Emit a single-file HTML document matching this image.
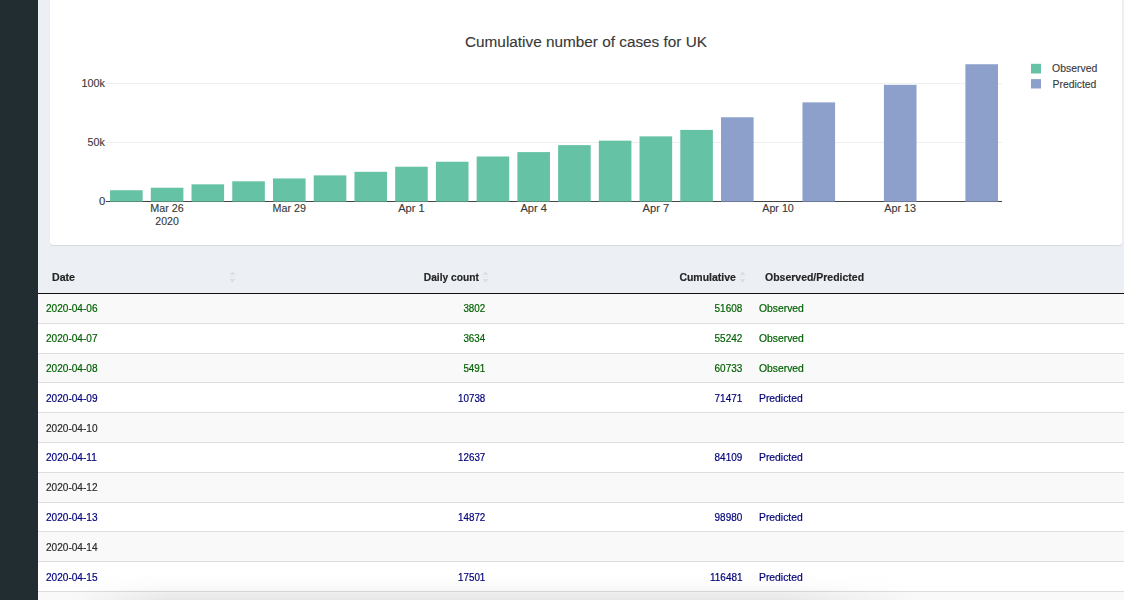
<!DOCTYPE html>
<html><head><meta charset="utf-8"><title>Cumulative number of cases for UK</title>
<style>
html,body{margin:0;padding:0}
body{width:1124px;height:600px;overflow:hidden;background:#ecf0f5;position:relative;font-family:"Liberation Sans",sans-serif}
.sidebar{position:absolute;left:0;top:0;width:38px;height:600px;background:#222d32}
.card{position:absolute;left:50px;top:-20px;width:1072px;height:264.5px;background:#fff;border-radius:3px;box-shadow:0 1px 1px rgba(0,0,0,0.1)}
svg.chart{position:absolute;left:0;top:0;font-family:"Liberation Sans",sans-serif}
.thead{z-index:2;position:absolute;left:38px;top:259px;width:1086px;height:34px;border-bottom:1px solid #111;box-sizing:content-box;font-weight:bold;font-size:11.3px;color:#262626;-webkit-text-stroke:0.2px #262626}
.thead span{position:absolute;top:10.6px;white-space:nowrap;line-height:14px}
.tr{position:absolute;left:38px;width:1086px;height:29.8px;border-top:1px solid #ddd;box-sizing:border-box;font-size:10.9px;line-height:14px;color:#2a2a2a}
.tr.odd{background:#f9f9f9}
.tr.even{background:#fff}
.tr.o{color:#006000}
.tr.p{color:#00007a}
.tr span{-webkit-text-stroke:0.2px currentColor;position:absolute;top:6.6px;white-space:nowrap}
.tr.first{border-top:0}
.c1{left:8px;transform:scaleX(0.925);transform-origin:0 50%}
.c2{right:638.4px;transform:scaleX(0.90);transform-origin:100% 50%}
.c3{right:381.8px;transform:scaleX(0.915);transform-origin:100% 50%}
.c4{left:720.6px;transform:scaleX(0.95);transform-origin:0 50%}
.sort{position:absolute}
.shade{position:absolute;left:38px;top:572px;width:1086px;height:28px;background:linear-gradient(to bottom,rgba(0,0,0,0),rgba(0,0,0,0.014) 50%,rgba(0,0,0,0.07));-webkit-mask-image:linear-gradient(to right,transparent 30px,#000 130px,#000 740px,transparent 880px);mask-image:linear-gradient(to right,transparent 30px,#000 130px,#000 740px,transparent 880px);pointer-events:none}
</style></head><body>
<div class="sidebar"></div>
<div class="card"></div>
<svg class="chart" width="1124" height="250" viewBox="0 0 1124 250">
<g stroke="#eee" stroke-width="1"><line x1="106" x2="1002" y1="83.6" y2="83.6"/><line x1="106" x2="1002" y1="142.5" y2="142.5"/></g>
<line x1="105.9" x2="1002" y1="201.45" y2="201.45" stroke="#444" stroke-width="1.1"/>
<g><rect x="110.06" y="190.22" width="32.60" height="11.83" fill="#66c2a5"/><rect x="150.79" y="187.72" width="32.60" height="14.33" fill="#66c2a5"/><rect x="191.52" y="184.32" width="32.60" height="17.73" fill="#66c2a5"/><rect x="232.25" y="181.32" width="32.60" height="20.73" fill="#66c2a5"/><rect x="272.98" y="178.45" width="32.60" height="23.60" fill="#66c2a5"/><rect x="313.71" y="175.37" width="32.60" height="26.68" fill="#66c2a5"/><rect x="354.44" y="171.82" width="32.60" height="30.23" fill="#66c2a5"/><rect x="395.17" y="166.73" width="32.60" height="35.32" fill="#66c2a5"/><rect x="435.90" y="161.73" width="32.60" height="40.32" fill="#66c2a5"/><rect x="476.63" y="156.49" width="32.60" height="45.56" fill="#66c2a5"/><rect x="517.37" y="152.09" width="32.60" height="49.96" fill="#66c2a5"/><rect x="558.10" y="145.13" width="32.60" height="56.92" fill="#66c2a5"/><rect x="598.83" y="140.66" width="32.60" height="61.39" fill="#66c2a5"/><rect x="639.55" y="136.37" width="32.60" height="65.68" fill="#66c2a5"/><rect x="680.28" y="129.91" width="32.60" height="72.14" fill="#66c2a5"/><rect x="721.01" y="117.26" width="32.60" height="84.79" fill="#8da0cb"/><rect x="802.48" y="102.37" width="32.60" height="99.68" fill="#8da0cb"/><rect x="883.93" y="84.85" width="32.60" height="117.20" fill="#8da0cb"/><rect x="965.39" y="64.24" width="32.60" height="137.81" fill="#8da0cb"/></g>
<line x1="105.9" x2="1002" y1="201.45" y2="201.45" stroke="#444" stroke-width="1.1" opacity="0.4"/>
<text x="586" y="46.9" text-anchor="middle" font-size="14" fill="#383838" stroke="#383838" stroke-width="0.12" textLength="242" lengthAdjust="spacingAndGlyphs">Cumulative number of cases for UK</text>
<g font-size="10" fill="#383838" stroke="#383838" stroke-width="0.12">
<text x="104.9" y="86.8" text-anchor="end" textLength="23.4" lengthAdjust="spacingAndGlyphs">100k</text>
<text x="104.9" y="145.5" text-anchor="end" textLength="17.3" lengthAdjust="spacingAndGlyphs">50k</text>
<text x="105.3" y="204.6" text-anchor="end" textLength="6.3" lengthAdjust="spacingAndGlyphs">0</text>
<text x="167.09" y="211.6" text-anchor="middle" textLength="33.4" lengthAdjust="spacingAndGlyphs">Mar 26</text><text x="289.28" y="211.6" text-anchor="middle" textLength="33.4" lengthAdjust="spacingAndGlyphs">Mar 29</text><text x="411.47" y="211.6" text-anchor="middle" textLength="26.5" lengthAdjust="spacingAndGlyphs">Apr 1</text><text x="533.66" y="211.6" text-anchor="middle" textLength="26.5" lengthAdjust="spacingAndGlyphs">Apr 4</text><text x="655.85" y="211.6" text-anchor="middle" textLength="26.5" lengthAdjust="spacingAndGlyphs">Apr 7</text><text x="778.04" y="211.6" text-anchor="middle" textLength="31.6" lengthAdjust="spacingAndGlyphs">Apr 10</text><text x="900.23" y="211.6" text-anchor="middle" textLength="31.8" lengthAdjust="spacingAndGlyphs">Apr 13</text>
<text x="167.1" y="224.9" text-anchor="middle" textLength="23.5" lengthAdjust="spacingAndGlyphs">2020</text>
<text x="1052.1" y="71.9" textLength="45.2" lengthAdjust="spacingAndGlyphs">Observed</text>
<text x="1052.5" y="87.7" textLength="43.9" lengthAdjust="spacingAndGlyphs">Predicted</text>
</g>
<rect x="1031" y="63.8" width="10" height="9.7" fill="#66c2a5"/>
<rect x="1031" y="79.1" width="10" height="9.4" fill="#8da0cb"/>
</svg>
<div class="thead">
<span style="left:14.3px;transform:scaleX(0.94);transform-origin:0 50%">Date</span>
<span style="right:645.4px;transform:scaleX(0.905);transform-origin:100% 50%">Daily count</span>
<span style="right:387.8px;transform:scaleX(0.928);transform-origin:100% 50%">Cumulative</span>
<svg class="sort" style="left:190.5px;top:12px" width="7" height="12" viewBox="0 0 7 12"><path d="M3.5 0.2 L6.5 4.4 L6.5 7.6 L3.5 11.8 L0.5 7.6 L0.5 4.4 Z" fill="#e7e9ed"/><path d="M3.5 0.2 L6.2 4.2 L0.8 4.2 Z M0.8 7.8 L6.2 7.8 L3.5 11.8 Z" fill="#dcdddf"/><path d="M1.2 4.7H5.8M1.2 7.3H5.8" stroke="#f6f7f9" stroke-width="0.8"/></svg><svg class="sort" style="left:444.4px;top:12px" width="7" height="12" viewBox="0 0 7 12"><path d="M3.5 0.2 L6.5 4.4 L6.5 7.6 L3.5 11.8 L0.5 7.6 L0.5 4.4 Z" fill="#e7e9ed"/><path d="M3.5 0.2 L6.2 4.2 L0.8 4.2 Z M0.8 7.8 L6.2 7.8 L3.5 11.8 Z" fill="#dcdddf"/><path d="M1.2 4.7H5.8M1.2 7.3H5.8" stroke="#f6f7f9" stroke-width="0.8"/></svg><svg class="sort" style="left:701px;top:12px" width="7" height="12" viewBox="0 0 7 12"><path d="M3.5 0.2 L6.5 4.4 L6.5 7.6 L3.5 11.8 L0.5 7.6 L0.5 4.4 Z" fill="#e7e9ed"/><path d="M3.5 0.2 L6.2 4.2 L0.8 4.2 Z M0.8 7.8 L6.2 7.8 L3.5 11.8 Z" fill="#dcdddf"/><path d="M1.2 4.7H5.8M1.2 7.3H5.8" stroke="#f6f7f9" stroke-width="0.8"/></svg><span style="left:726.6px;transform:scaleX(0.928);transform-origin:0 50%">Observed/Predicted</span>
</div>
<div class="tr o odd first" style="top:294px;height:29px"><span class="c1" style="top:7.00px">2020-04-06</span><span class="c2" style="top:7.00px">3802</span><span class="c3" style="top:7.00px">51608</span><span class="c4" style="top:7.00px">Observed</span></div><div class="tr o even" style="top:323px;height:30px"><span class="c1" style="top:6.89px">2020-04-07</span><span class="c2" style="top:6.89px">3634</span><span class="c3" style="top:6.89px">55242</span><span class="c4" style="top:6.89px">Observed</span></div><div class="tr o odd" style="top:353px;height:29px"><span class="c1" style="top:6.78px">2020-04-08</span><span class="c2" style="top:6.78px">5491</span><span class="c3" style="top:6.78px">60733</span><span class="c4" style="top:6.78px">Observed</span></div><div class="tr p even" style="top:382px;height:30px"><span class="c1" style="top:7.67px">2020-04-09</span><span class="c2" style="top:7.67px">10738</span><span class="c3" style="top:7.67px">71471</span><span class="c4" style="top:7.67px">Predicted</span></div><div class="tr n odd" style="top:412px;height:30px"><span class="c1" style="top:7.56px">2020-04-10</span><span class="c2" style="top:7.56px"></span><span class="c3" style="top:7.56px"></span><span class="c4" style="top:7.56px"></span></div><div class="tr p even" style="top:442px;height:30px"><span class="c1" style="top:7.45px">2020-04-11</span><span class="c2" style="top:7.45px">12637</span><span class="c3" style="top:7.45px">84109</span><span class="c4" style="top:7.45px">Predicted</span></div><div class="tr n odd" style="top:472px;height:30px"><span class="c1" style="top:7.34px">2020-04-12</span><span class="c2" style="top:7.34px"></span><span class="c3" style="top:7.34px"></span><span class="c4" style="top:7.34px"></span></div><div class="tr p even" style="top:502px;height:29px"><span class="c1" style="top:7.23px">2020-04-13</span><span class="c2" style="top:7.23px">14872</span><span class="c3" style="top:7.23px">98980</span><span class="c4" style="top:7.23px">Predicted</span></div><div class="tr n odd" style="top:531px;height:30px"><span class="c1" style="top:8.12px">2020-04-14</span><span class="c2" style="top:8.12px"></span><span class="c3" style="top:8.12px"></span><span class="c4" style="top:8.12px"></span></div><div class="tr p even" style="top:561px;height:30px"><span class="c1" style="top:8.01px">2020-04-15</span><span class="c2" style="top:8.01px">17501</span><span class="c3" style="top:8.01px">116481</span><span class="c4" style="top:8.01px">Predicted</span></div><div class="tr n odd" style="top:591px;height:30px"><span class="c1" style="top:7.90px"></span><span class="c2" style="top:7.90px"></span><span class="c3" style="top:7.90px"></span><span class="c4" style="top:7.90px"></span></div>
<div class="shade"></div>
</body></html>
